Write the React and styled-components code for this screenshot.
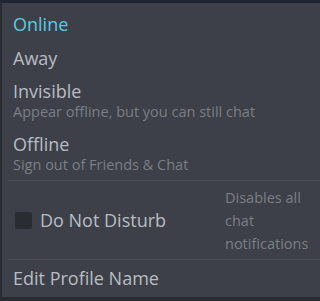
import React from "react";
import styled, { createGlobalStyle } from "styled-components";

const Global = createGlobalStyle`
  html, body {
    margin: 0;
    padding: 0;
    background: #2a2c32;
  }
  body {
    font-family: "Open Sans", "Liberation Sans", sans-serif;
  }
`;

const Frame = styled.div`
  width: 320px;
  height: 301px;
  box-sizing: border-box;
  border-top: 3px solid #1f2633;
  border-left: 2px solid #2a2c33;
  border-bottom: 4px solid #2a2c33;
  background: #3d4048;
  display: flex;
  flex-direction: column;
  overflow: hidden;
`;

const Item = styled.div`
  padding: ${(p) => p.$pad || "6px 11px"};
  color: ${(p) => (p.$active ? "#5ec8e4" : "#b9bcc3")};
  font-size: 18px;
  line-height: 24px;
`;

const Sub = styled.div`
  color: #7b7e86;
  font-size: 14.5px;
  line-height: 18px;
`;

const Divider = styled.div`
  height: 1px;
  background: #4c4f57;
  margin-left: 6px;
`;

const DndRow = styled.div`
  display: flex;
  align-items: center;
  padding: 0 8px 0 13px;
  height: 78px;
`;

const Check = styled.span`
  width: 17px;
  height: 17px;
  border-radius: 2px;
  background: #2a2c33;
  flex: none;
`;

const DndLabel = styled.span`
  color: #b9bcc3;
  font-size: 18px;
  margin-left: 8px;
  flex: 1;
`;

const DndNote = styled.span`
  color: #7b7e86;
  font-size: 14.5px;
  line-height: 23px;
  width: 87px;
`;

export default function App() {
  return (
    <>
      <Global />
      <Frame>
        <Item $active $pad="9px 11px 5px">Online</Item>
        <Item $pad="5px 11px 4px">Away</Item>
        <Item $pad="5px 11px 5px">
          Invisible
          <Sub>Appear offline, but you can still chat</Sub>
        </Item>
        <Item $pad="6px 11px 6px">
          Offline
          <Sub>Sign out of Friends &amp; Chat</Sub>
        </Item>
        <Divider />
        <DndRow>
          <Check />
          <DndLabel>Do Not Disturb</DndLabel>
          <DndNote>Disables all chat notifications</DndNote>
        </DndRow>
        <Divider />
        <Item $pad="6px 11px">Edit Profile Name</Item>
      </Frame>
    </>
  );
}
